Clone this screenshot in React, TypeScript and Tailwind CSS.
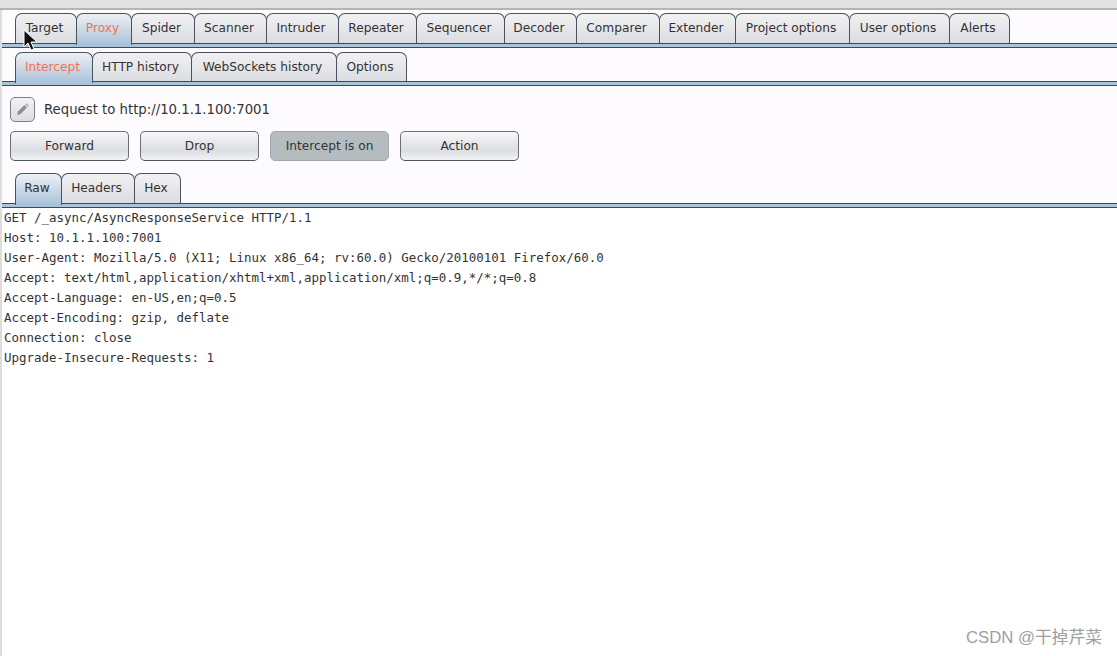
const mainTabs = [
  { label: "Target", w: "w-[62px]" },
  { label: "Proxy", w: "w-[56px]", active: true },
  { label: "Spider", w: "w-[64px]" },
  { label: "Scanner", w: "w-[73px]" },
  { label: "Intruder", w: "w-[73px]" },
  { label: "Repeater", w: "w-[79px]" },
  { label: "Sequencer", w: "w-[89px]" },
  { label: "Decoder", w: "w-[73px]" },
  { label: "Comparer", w: "w-[84px]" },
  { label: "Extender", w: "w-[77px]" },
  { label: "Project options", w: "w-[115px]" },
  { label: "User options", w: "w-[101px]" },
  { label: "Alerts", w: "w-[61px]" },
];

const proxyTabs = [
  { label: "Intercept", w: "w-[78px]", active: true },
  { label: "HTTP history", w: "w-[100px]" },
  { label: "WebSockets history", w: "w-[146px]" },
  { label: "Options", w: "w-[71px]" },
];

const messageTabs = [
  { label: "Raw", w: "w-[47px]", active: true },
  { label: "Headers", w: "w-[74px]" },
  { label: "Hex", w: "w-[47px]" },
];

const requestLines = [
  "GET /_async/AsyncResponseService HTTP/1.1",
  "Host: 10.1.1.100:7001",
  "User-Agent: Mozilla/5.0 (X11; Linux x86_64; rv:60.0) Gecko/20100101 Firefox/60.0",
  "Accept: text/html,application/xhtml+xml,application/xml;q=0.9,*/*;q=0.8",
  "Accept-Language: en-US,en;q=0.5",
  "Accept-Encoding: gzip, deflate",
  "Connection: close",
  "Upgrade-Insecure-Requests: 1",
];

type TabItem = { label: string; w: string; active?: boolean };

const TabRow = ({ tabs, height, orange }: { tabs: TabItem[]; height: string; orange?: boolean }) => (
  <div className={`flex pl-[13px] ${height}`}>
    {tabs.map((tab) => (
      <div
        key={tab.label}
        className={`flex items-center justify-center rounded-t-[7px] border border-b-0 border-[#4a5260] -mr-px pr-[3px] text-[12.2px] ${tab.w} ${
          tab.active
            ? "relative z-10 -mb-[2px] bg-gradient-to-b from-[#eef0f3] to-[#a9c3da] pb-[2px]"
            : "bg-gradient-to-b from-[#f1f1f3] to-[#dcdde1]"
        } ${tab.active && orange ? "text-[#f0734f]" : "text-[#333333]"}`}
      >
        {tab.label}
      </div>
    ))}
  </div>
);

const Divider = () => (
  <div className="h-[5px] border-y border-[#3f4859] bg-[#a9c3da]" />
);

const ActionButton = ({ label, on }: { label: string; on?: boolean }) => (
  <div
    className={`flex h-[30px] w-[119px] items-center justify-center rounded-[5px] border text-[12.2px] ${
      on
        ? "border-[#a3a8ab] bg-[#b5bcc0] text-[#333333]"
        : "border-[#6a6f78] border-b-[#4e535c] bg-gradient-to-b from-[#f8f8fa] via-[#dcdde1] via-65% to-[#f2f3f6] text-[#333333]"
    }`}
  >
    {label}
  </div>
);

export default function App() {
  return (
    <div className="relative h-[656px] w-[1117px] overflow-hidden bg-[#dddddd] font-['DejaVu_Sans',sans-serif]">
      <div className="h-[10px] border-b-2 border-[#b4b4b6] bg-[#e0e1e1]" />

      <div className="ml-[2px] h-[646px] bg-white">
        <div className="bg-[#fefbff]">
          <div className="pt-[3px]">
            <TabRow tabs={mainTabs} height="h-[30px]" orange />
          </div>
          <Divider />
          <div className="pt-[4px]">
            <TabRow tabs={proxyTabs} height="h-[29px]" orange />
          </div>
          <Divider />

          <div className="flex h-[35px] items-center gap-[9px] pl-[8px] pt-[12px]">
            <div className="flex h-[25px] w-[25px] items-center justify-center rounded-[5px] border border-[#7b8088] bg-gradient-to-b from-[#f2f2f4] to-[#dcdde1]">
              <svg width="15" height="15" viewBox="0 0 15 15">
                <path d="M2 13l1-3.500 6.500-6.500 2.500 2.500-6.500 6.500z" fill="#8d8f94" />
                <path d="M10.300 2.200l1-1 2.500 2.500-1 1z" fill="#a8aaae" />
              </svg>
            </div>
            <span className="text-[13.25px] text-[#333333]">Request to http://10.1.1.100:7001</span>
          </div>

          <div className="flex gap-[11px] pl-[8px] pt-[10px]">
            <ActionButton label="Forward" />
            <ActionButton label="Drop" />
            <ActionButton label="Intercept is on" on />
            <ActionButton label="Action" />
          </div>

          <div className="pt-[12px]">
            <TabRow tabs={messageTabs} height="h-[30px]" />
          </div>
        </div>
        <Divider />

        <div className="pl-[2px] font-['DejaVu_Sans_Mono',monospace] text-[12.46px] leading-[20px] text-[#333333]">
          {requestLines.map((line) => (
            <div key={line} className="whitespace-pre">
              {line}
            </div>
          ))}
        </div>
      </div>

      {/* mouse pointer */}
      <svg className="absolute left-[23px] top-[29px] z-20" width="15" height="24" viewBox="0 0 15 24">
        <path d="M1 1v17l4-4 3 7 3-1-3-7h6z" fill="#111111" stroke="#ffffff" strokeWidth="1" />
      </svg>

      {/* watermark */}
      <div className="absolute right-[15px] top-[628px] font-['Liberation_Sans','Noto_Sans_CJK_SC',sans-serif] text-[16.75px] leading-[20px] text-[#a0a0a0]">
        CSDN @干掉芹菜
      </div>
    </div>
  );
}
